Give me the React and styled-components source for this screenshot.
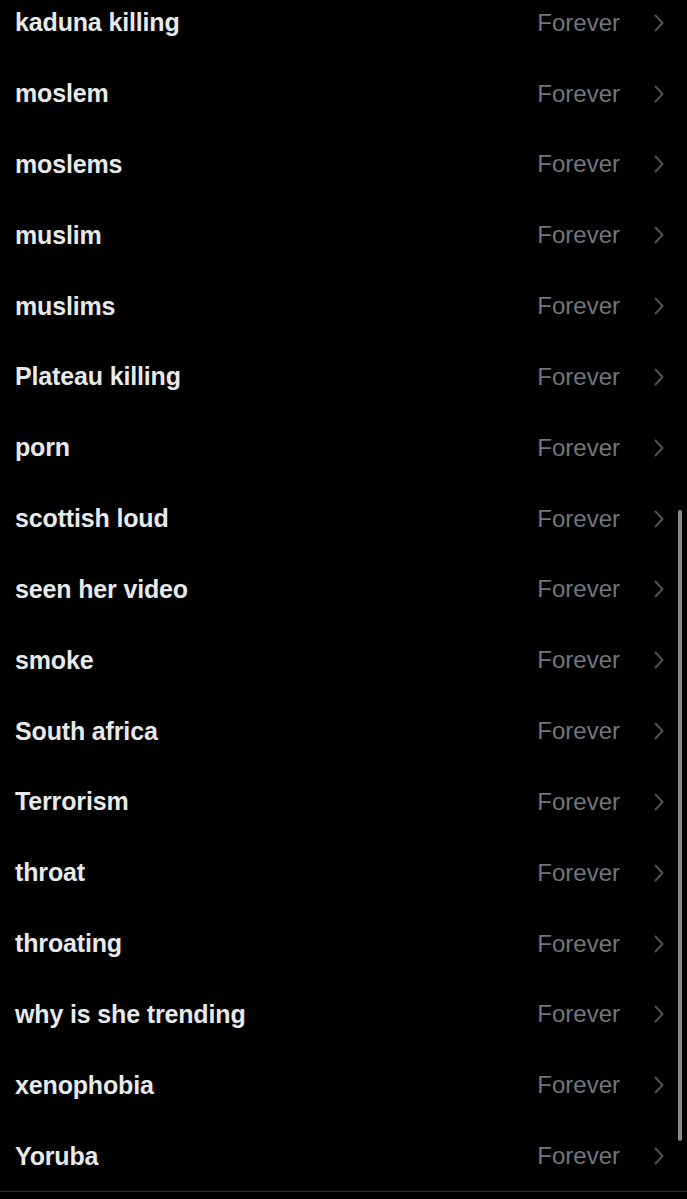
import React from "react";
import styled, { createGlobalStyle } from "styled-components";

const GlobalStyle = createGlobalStyle`
  html, body {
    margin: 0;
    padding: 0;
    background: #000;
  }
  body {
    font-family: "Liberation Sans", Arial, sans-serif;
    -webkit-font-smoothing: antialiased;
  }
`;

const Screen = styled.div`
  position: relative;
  width: 687px;
  height: 1199px;
  overflow: hidden;
  background: #000;
`;

const List = styled.ul`
  list-style: none;
  margin: -12.6px 0 0 0;
  padding: 0;
`;

const Row = styled.li`
  display: flex;
  align-items: center;
  height: 70.83px;
  padding: 0 23px 0 15px;
  box-sizing: border-box;
`;

const Label = styled.span`
  flex: 1;
  font-size: 25px;
  font-weight: 700;
  color: #e7e9ea;
  letter-spacing: -0.15px;
  white-space: nowrap;
`;

const Value = styled.span`
  font-size: 24px;
  font-weight: 400;
  color: #71767b;
`;

const Chevron = styled.svg`
  display: block;
  width: 10px;
  height: 18px;
  margin-left: 34px;
  flex: none;
`;

const Footer = styled.div`
  border-top: 1px solid #2f3336;
  height: 20px;
  background: #000;
`;

const ScrollThumb = styled.div`
  position: absolute;
  right: 5px;
  top: 510px;
  width: 4px;
  height: 631px;
  border-radius: 2px;
  background: #8b8b8b;
`;

const words = [
  "kaduna killing",
  "moslem",
  "moslems",
  "muslim",
  "muslims",
  "Plateau killing",
  "porn",
  "scottish loud",
  "seen her video",
  "smoke",
  "South africa",
  "Terrorism",
  "throat",
  "throating",
  "why is she trending",
  "xenophobia",
  "Yoruba",
];

function ChevronIcon() {
  return (
    <Chevron viewBox="0 0 10 18" aria-hidden="true">
      <path
        d="M1.5 1.5 L8.5 9 L1.5 16.5"
        fill="none"
        stroke="#4f5255"
        strokeWidth="2"
        strokeLinecap="round"
        strokeLinejoin="round"
      />
    </Chevron>
  );
}

export default function App() {
  return (
    <>
      <GlobalStyle />
      <Screen>
        <List>
          {words.map((w) => (
            <Row key={w}>
              <Label>{w}</Label>
              <Value>Forever</Value>
              <ChevronIcon />
            </Row>
          ))}
        </List>
        <Footer />
        <ScrollThumb />
      </Screen>
    </>
  );
}
